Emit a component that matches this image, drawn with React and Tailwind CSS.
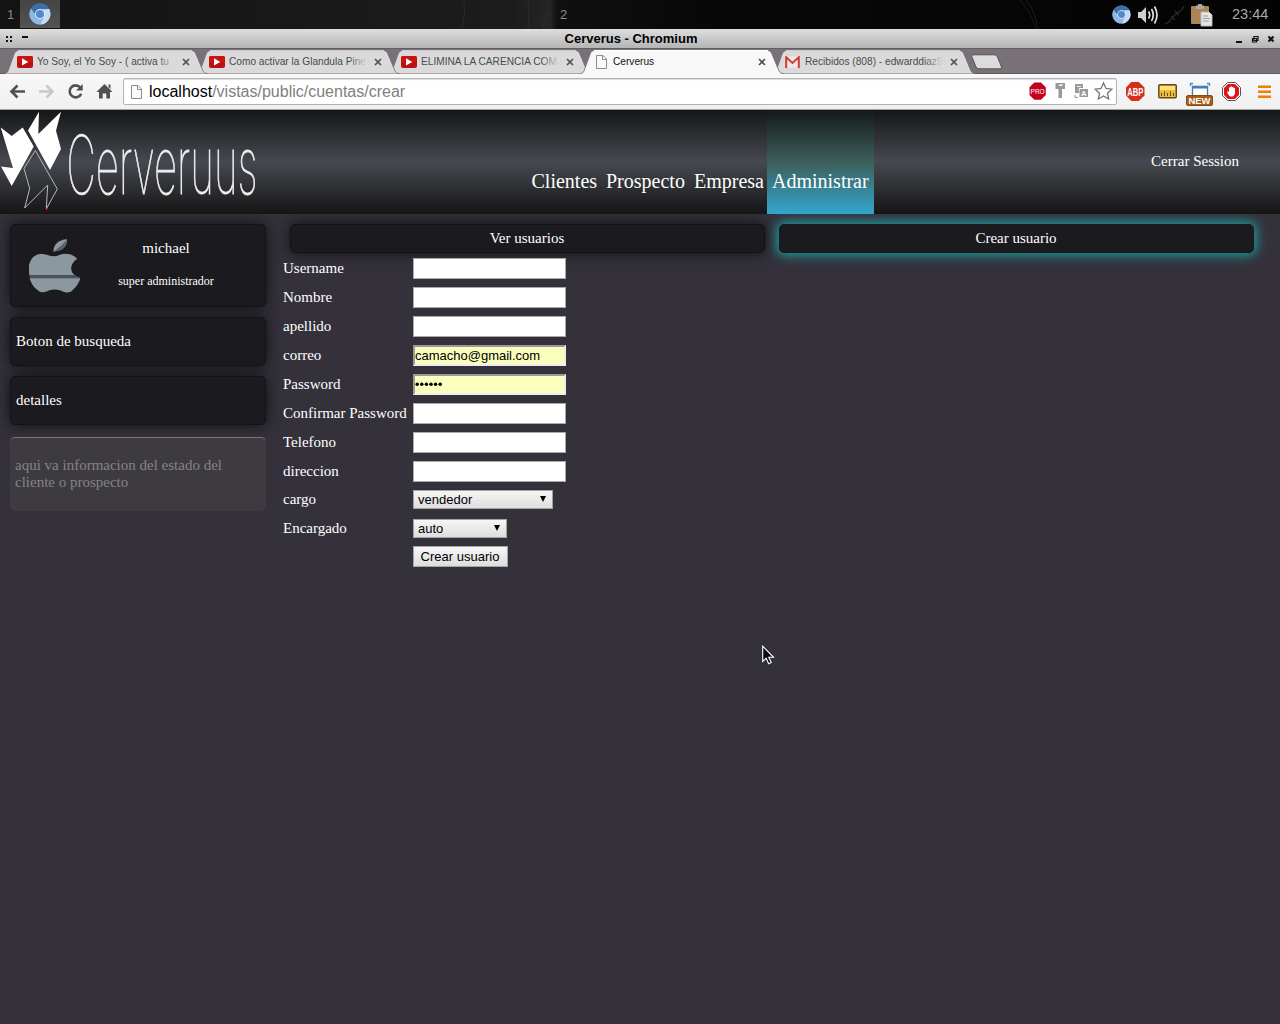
import React from "react";

function ChromiumIcon({ size, className = "" }) {
  return (
    <svg width={size} height={size} viewBox="0 0 24 24" className={className}>
      <circle cx="12" cy="12" r="11.5" fill="#76a3d6" />
      <path d="M2 6.3A11.5 11.5 0 0 1 22 6.5H12L7 12z" fill="#3f6fa6" />
      <path d="M22 6.5A11.5 11.5 0 0 1 12 23.5L17 13.5L15.5 7z" fill="#c6dcf2" />
      <path d="M2 6.3A11.5 11.5 0 0 0 12 23.5L15 17L7 13z" fill="#8db8e6" />
      <circle cx="12" cy="12" r="5.4" fill="#e3effa" />
      <circle cx="12" cy="12" r="4.4" fill="#5388c9" />
    </svg>
  );
}

function YoutubeIcon() {
  return (
    <svg width="16" height="12" viewBox="0 0 16 12">
      <rect width="16" height="12" rx="2" fill="#b9110f" />
      <rect width="16" height="6" rx="2" fill="#c91412" />
      <path d="M5 2.3L11.3 6L5 9.4z" fill="#fff" />
    </svg>
  );
}

function PageIcon({ className = "" }) {
  return (
    <svg width="13" height="16" viewBox="0 0 13 16" className={className}>
      <path d="M1.5 1.5H8L11.5 5V14.5H1.5z" fill="#fafafa" stroke="#8c8c8c" />
      <path d="M7.5 1.5V5.5H11.5" fill="none" stroke="#8c8c8c" />
    </svg>
  );
}

function GmailIcon() {
  return (
    <svg width="15" height="12" viewBox="0 0 15 12">
      <rect x="1" y="0.5" width="13" height="11" fill="#eee9e8" />
      <path d="M1.2 12V1.2L7.5 7L13.8 1.2V12" fill="none" stroke="#d23c33" strokeWidth="2" />
    </svg>
  );
}

function Tab({ title, icon, active, layer, fade }) {
  return (
    <div className={`relative flex h-6 w-[204px] shrink-0 items-center pl-[13px] ${layer}`}>
      <svg className="absolute left-0 top-0" width="204" height="24" viewBox="0 0 204 24">
        <path
          d="M0 24Q3 23.500 4 21L10.500 3Q11.500 .5 14 .5H188Q190.500 .5 191.500 3L199 21Q200 23.500 204 24z"
          fill={active ? "#f8f8f8" : "#dadada"}
        />
        {!active && <path d="M3 23.500H201" stroke="#a9a7a8" />}
        <path d="M14 .5H188" stroke={active ? "#ffffff" : "#cfccce"} />
        <path
          d="M0 24Q3 23.500 4 21L10.500 3Q11.500 .5 14 .5M188 .5Q190.500 .5 191.500 3L199 21Q200 23.500 204 24"
          fill="none"
          stroke="#6d676b"
          strokeOpacity="0.75"
        />
      </svg>
      <div className="relative flex w-5 shrink-0 items-center">{icon}</div>
      <div className="relative h-[18px] w-[138px]">
        <span
          className={`block w-fit origin-left scale-x-[0.922] whitespace-nowrap text-[11px] leading-[17px] ${active ? "text-[#111]" : "text-[#4a4a4a]"}`}
        >
          {title}
        </span>
        {fade && <span className="absolute right-0 top-0 h-[18px] w-[18px] bg-linear-to-r from-[#dadada]/0 to-[#dadada]" />}
      </div>
      <svg className="relative ml-[7px]" width="8" height="8" viewBox="0 0 8 8">
        <path d="M1 1L7 7M7 1L1 7" stroke="#4e4e4e" strokeWidth="1.6" />
      </svg>
    </div>
  );
}

function DesktopBar() {
  return (
    <div className="flex h-[29px] items-center bg-[linear-gradient(90deg,#131313,#181818_20%,#1c1c1c_40%,#252525_43%,#101010_43.500%,#080808_55%,#030303)] text-[#8b8b84]">
      <span className="w-5 pl-[7px] text-[13px]">1</span>
      <div className="flex h-[28px] w-10 items-center justify-center self-start bg-linear-to-b from-[#444] to-[#545454]">
        <ChromiumIcon size={22} />
      </div>
      <svg width="492" height="29" viewBox="0 0 492 29" className="shrink-0">
        <path d="M491 12Q485 14 483 29M468 0Q470 14 468 29M404 0Q406 14 402 29" stroke="#3b3b3b" fill="none" opacity="0.5" />
      </svg>
      <span className="w-[20px] pl-2 text-[13px]">2</span>
      <svg width="540" height="29" viewBox="0 0 540 29" className="shrink-0">
        <path d="M448 0Q459 12 464 29M454 0Q463 10 466 29" stroke="#1c1c1c" fill="none" />
      </svg>
      <ChromiumIcon size={19} />
      <svg width="22" height="20" viewBox="0 0 22 20" className="ml-[6px]">
        <path d="M1 7H4L9 2V18L4 13H1z" fill="#cfcfcf" />
        <path d="M11.500 6.500Q14 10 11.500 13.500M14.500 4Q18 10 14.500 16M17.500 1.500Q22.500 10 17.500 18.500" fill="none" stroke="#e2e2e2" strokeWidth="1.7" />
      </svg>
      <svg width="22" height="22" viewBox="0 0 22 22" className="ml-[5px]">
        <path d="M1 20Q6 18 8 14L13 9Q17 8 20 2M7 12L11 16M11 7L15 11" fill="none" stroke="#262626" strokeWidth="1.6" />
      </svg>
      <svg width="24" height="24" viewBox="0 0 24 24" className="ml-[4px]">
        <rect x="1" y="3" width="18" height="18" rx="1" fill="#a98456" />
        <path d="M6 2.500H8V1H12V2.500H14V6H6z" fill="#aaa9a5" />
        <path d="M11 9H19L22 12V23H11z" fill="#e6e6e6" stroke="#b7b7b7" />
        <path d="M13 13H18M13 15.500H20M13 18H19" stroke="#9b9b9b" />
      </svg>
      <span className="ml-[18px] text-[14.500px] text-[#aaa]">23:44</span>
    </div>
  );
}

function TitleBar() {
  return (
    <div className="flex h-5 items-center border-b border-[#625d60] bg-linear-to-b from-[#dedede] to-[#b5b5b5] text-black">
      <svg width="32" height="10" viewBox="0 0 32 10">
        <path d="M6 2h2v2h-2zM10 2h2v2h-2zM6 6h2v2h-2zM10 6h2v2h-2zM22 2h6v2h-6z" fill="#111" />
      </svg>
      <h1 className="flex-1 pr-1 text-center text-[13px] font-bold leading-[18px]">Cerverus - Chromium</h1>
      <svg width="46" height="10" viewBox="0 0 46 10">
        <path d="M2 7h6v2H2z" fill="#111" />
        <path d="M20 2.500h4v4h-4zM18.500 4.500h4v3.500h-4z" fill="#c8c8c8" stroke="#111" strokeWidth="1.2" />
        <path d="M34.500 2.500L39.500 7.500M39.500 2.500L34.500 7.500" stroke="#111" strokeWidth="2.200" />
      </svg>
    </div>
  );
}

function TabStrip() {
  return (
    <div className="flex h-[25px] items-end bg-[#787177] pl-1 shadow-[inset_0_-1px_0_#5f5a5e]">
      <Tab layer="z-30" icon={<YoutubeIcon />} title="Yo Soy, el Yo Soy - ( activa tu" fade />
      <div className="-ml-3"><Tab layer="z-20" icon={<YoutubeIcon />} title="Como activar la Glandula Pine" fade /></div>
      <div className="-ml-3"><Tab layer="z-10" icon={<YoutubeIcon />} title="ELIMINA LA CARENCIA COM" fade /></div>
      <div className="-ml-3"><Tab layer="z-40" icon={<PageIcon className="ml-[2px]" />} title="Cerverus" active /></div>
      <div className="-ml-3"><Tab layer="z-0" icon={<GmailIcon />} title="Recibidos (808) - edwarddiaz9" fade /></div>
      <svg width="34" height="17" viewBox="0 0 34 17" className="mb-[3px] -ml-[6px]">
        <path d="M3 .8H24.500Q26.500 .8 27.500 3L31.500 13Q32 14.800 30 14.800H9Q7 14.800 6 13L1.800 2.600Q1.300 .8 3 .8z" fill="#dcdcdc" stroke="#575257" />
      </svg>
    </div>
  );
}

function Toolbar() {
  return (
    <div className="flex h-9 items-center border-b border-[#a3a3a3] bg-linear-to-b from-[#f8f8f8] to-[#f0f0f0]">
      <svg width="123" height="35" viewBox="0 0 123 35" fill="none" className="shrink-0">
        <path d="M25 17.500H12M17.500 11.500L11.500 17.500L17.500 23.500" stroke="#505050" strokeWidth="2.600" />
        <path d="M39 17.500H52M46.500 11.500L52.500 17.500L46.500 23.500" stroke="#c9c9c9" strokeWidth="2.600" />
        <path d="M80.300 13.500A6 6 0 1 0 81.200 19.700" stroke="#505050" strokeWidth="2.600" />
        <path d="M82.700 10V16.500H76z" fill="#505050" />
        <path d="M104.500 10L112.500 18H110V24.500H106.300V19.500H102.700V24.500H99V18H96.500zM108.500 10.500H110.500V15L108.500 13z" fill="#505050" />
      </svg>
      <div className="flex h-[27px] w-[994px] shrink-0 items-center rounded-[2px] border border-[#b3b3b3] bg-white pl-[6px] shadow-[inset_0_1px_1px_#ddd]">
        <PageIcon />
        <p className="ml-[6px] w-[879px] shrink-0 whitespace-nowrap text-[16px] leading-6 text-[#808080]">
          <span className="text-black">localhost</span>/vistas/public/cuentas/crear
        </p>
        <svg width="86" height="25" viewBox="0 0 86 25" className="shrink-0">
          <path d="M6.300 3.500H13L17.800 8.200V16L13 20.800H6.300L1.500 16V8.200z" fill="#c4001d" />
          <text x="9.600" y="15.200" textAnchor="middle" fontSize="7.500" fill="#fff" fontFamily="Liberation Sans" textLength="14" lengthAdjust="spacingAndGlyphs">PRO</text>
          <path d="M27.500 4H37V10H34V19H30.500V10H27.500z" fill="#999" />
          <path d="M31 5.500H34.500V7H31z" fill="#fff" />
          <path d="M47 5H55V9H51V14H47z" fill="#999" />
          <path d="M49 7.500H53M50 11H51" stroke="#eee" />
          <rect x="51.500" y="10" width="8.500" height="8" fill="#999" />
          <text x="55.800" y="17" textAnchor="middle" fontSize="7.500" fontWeight="bold" fill="#fff" fontFamily="Liberation Sans">A</text>
          <path d="M47 16V18.500H50" stroke="#999" fill="none" />
          <path d="M75.500 4L78 9.500L83.800 10.200L79.500 14.200L80.700 20L75.500 17L70.300 20L71.500 14.200L67.200 10.200L73 9.500z" fill="#fff" stroke="#777" strokeWidth="1.300" />
        </svg>
      </div>
      <svg width="163" height="35" viewBox="0 0 163 35" className="shrink-0">
        <path d="M14.200 8H21.800L27.500 13.500V21.500L21.800 27H14.200L9 21.500V13.500z" fill="#d2311d" />
        <text x="18.200" y="21.500" textAnchor="middle" fontSize="10" fontWeight="bold" fill="#fff" fontFamily="Liberation Sans" textLength="16" lengthAdjust="spacingAndGlyphs">ABP</text>
        <rect x="41.800" y="10.700" width="17.500" height="13" rx="1" fill="#f0bd35" stroke="#5c4b20" strokeWidth="1.400" />
        <rect x="43" y="12" width="15" height="4" fill="#ffe07a" />
        <path d="M44.500 22V19M47.500 22V17.500M50.500 22V19M53.500 22V17.500M56.500 22V19" stroke="#5c4b20" />
        <path d="M73.500 12V9.500H76M90 9.500H92.500V12" fill="none" stroke="#4d87ba" strokeWidth="1.300" />
        <path d="M75.500 21V12.500H90.500V21" fill="#fff" stroke="#4380b4" strokeWidth="1.300" />
        <path d="M75 13.500H91" stroke="#4380b4" strokeWidth="2" />
        <rect x="69.500" y="21.500" width="26" height="10" rx="1.500" fill="#a85d18" stroke="#8c4a10" />
        <text x="82.500" y="30" textAnchor="middle" fontSize="9.500" fontWeight="bold" fill="#fff" fontFamily="Liberation Sans" textLength="22" lengthAdjust="spacingAndGlyphs">NEW</text>
        <path d="M110.500 8.500H118.500L123.500 13.500V21.500L118.500 26.500H110.500L105.500 21.500V13.500z" fill="#fff" stroke="#555" />
        <path d="M111 10H118L122 14V21L118 25H111L107 21V14z" fill="#dc1518" />
        <path d="M110.500 17L112 18V13.500H113.300V12.500H115V13H116.500V14H118V20L116 22.500H113L110.500 19.500z" fill="#fff" />
        <path d="M141 12.700H154M141 17.700H154M141 22.700H154" stroke="#e98207" strokeWidth="2.500" />
      </svg>
    </div>
  );
}

function Logo() {
  return (
    <svg width="280" height="104" viewBox="0 0 280 104" className="shrink-0">
      <g fill="#fff">
        <path d="M.7 17.500L11.700 26L22.700 17.500L33.700 36.500L11.700 76L1 56.500L13 58z" />
        <path d="M28 20.500L39 1.700L38.300 24L61 1.700L56 20.700L61 39L50 60z" />
      </g>
      <path d="M35.300 40.500L57.300 79L46.300 99L47.700 75L24.700 98L29.700 78.500L24 58.500z" fill="none" stroke="#b9b9bb" />
      <path d="M46 98.500h1.500v1.500h-1.500z" fill="#e00" />
      <text x="66.500" y="84" fontFamily="Inter" fontWeight="100" fontSize="81" fill="#f0f0f0" stroke="#f0f0f0" strokeWidth="0.900" textLength="191" lengthAdjust="spacingAndGlyphs">
        Cerveruus
      </text>
    </svg>
  );
}

function Header() {
  return (
    <header className="flex h-[104px] bg-[linear-gradient(#151617,#464950_50%,#151515)] text-white">
      <Logo />
      <nav className="ml-[247px] flex whitespace-nowrap text-[20px] leading-6">
        <a className="w-[74px] pl-[4.500px] pt-[59px]">Clientes</a>
        <a className="w-[88px] pl-[5px] pt-[59px]">Prospecto</a>
        <a className="w-[78px] pl-[5px] pt-[59px]">Empresa</a>
        <a className="w-[107px] bg-[linear-gradient(#151919,#3d5f5c_50%,#33a6cd)] pl-[5px] pt-[59px]">Administrar</a>
      </nav>
      <a className="ml-auto pr-[41px] pt-[42px] text-[15px] leading-[18px]">Cerrar Session</a>
    </header>
  );
}

function AppleIcon() {
  return (
    <svg width="52" height="54" viewBox="87 72 156 162" className="mt-3.5 ml-[18px] shrink-0">
      <path d="M91 188C84 170 84 150 93 135C105 113 130 115 145 121Q163 127 180 119C200 112 220 118 232 132C212 143 206 170 226 182L241 190H90z" fill="#8c989f" />
      <path d="M89 180H225L236 189H90z" fill="#4c5358" />
      <path d="M89 190H241C237 205 225 222 212 230C200 235 190 231 180 226Q163 221 148 226C140 230 130 235 120 230C105 222 94 208 89 190z" fill="#8c989f" />
      <path d="M160 110C160 90 175 74 201 73C203 90 185 110 160 110z" fill="#8c989f" />
      <path d="M162 109Q183 94 200 75Q202 108 162 109z" fill="#59636a" />
    </svg>
  );
}

const card = "rounded-[5px] border border-[#131216] bg-[#1b1a1e] shadow-[0_0_15px_rgba(0,0,0,0.7)]";

function Sidebar() {
  return (
    <aside className="flex w-64 shrink-0 flex-col gap-2.5 text-[15px] leading-[17px]">
      <section className={`flex h-[83px] ${card}`}>
        <AppleIcon />
        <div className="ml-[25px] w-[120px] pt-[15px] text-center">
          <p>michael</p>
          <p className="mt-4 text-[12px] leading-4">super administrador</p>
        </div>
      </section>
      <section className={`flex h-[49px] items-center pl-[5px] ${card}`}>Boton de busqueda</section>
      <section className={`flex h-[49px] items-center pl-[5px] ${card}`}>detalles</section>
      <p className="relative mt-0.5 h-[74px] rounded-[5px] border-t border-[#77757a] bg-[#3d3b40] pl-[5px] pr-8 pt-[19px] text-[#858388]">
        aqui va informacion del estado del cliente o prospecto
      </p>
    </aside>
  );
}

const fields = [
  ["Username", ""],
  ["Nombre", ""],
  ["apellido", ""],
  ["correo", "camacho@gmail.com"],
  ["Password", "••••••"],
  ["Confirmar Password", ""],
  ["Telefono", ""],
  ["direccion", ""],
];

function Select({ value, width }) {
  return (
    <div className={`flex h-[19px] items-center justify-between border border-[#a3a3a3] bg-linear-to-b from-[#f6f6f6] to-[#dedede] pl-1 pr-[5px] font-[Liberation_Sans] text-[13px] leading-4 text-black ${width}`}>
      {value}
      <svg width="8" height="8" viewBox="0 0 8 8" className="mb-px"><path d="M1 1H7L4 7z" fill="#000" /></svg>
    </div>
  );
}

function UserForm() {
  return (
    <form className="relative mt-[5px] text-[15px] leading-[21px]">
      {fields.map(([label, value]) => (
        <div key={label} className="mb-2 flex h-[21px]">
          <label className="w-[130px] whitespace-nowrap">{label}</label>
          <div
            className={
              value
                ? "h-[21px] w-[153px] border-2 border-[#eee] border-l-[#9a9a9a] border-t-[#9a9a9a] bg-[#faffbd] font-[Liberation_Sans] text-[13px] leading-[17px] text-black"
                : "h-[21px] w-[153px] border border-[#a9a9a9] bg-white"
            }
          >
            {label === "Password" ? (
              <svg width="30" height="16" viewBox="0 0 30 16" className="block">
                {[0, 1, 2, 3, 4, 5].map((n) => (
                  <circle key={n} cx={2.2 + n * 4.6} cy="8.300" r="1.750" />
                ))}
              </svg>
            ) : (
              value
            )}
          </div>
        </div>
      ))}
      <div className="mb-2.5 flex h-[19px] leading-[19px]">
        <label className="w-[130px]">cargo</label>
        <Select value="vendedor" width="w-[140px]" />
      </div>
      <div className="mb-2 flex h-[19px] leading-[19px]">
        <label className="w-[130px]">Encargado</label>
        <Select value="auto" width="w-[94px]" />
      </div>
      <button type="button" className="ml-[130px] block h-[21px] w-[95px] whitespace-nowrap border border-[#a3a3a3] bg-linear-to-b from-[#f6f6f6] to-[#dedede] pr-px font-[Liberation_Sans] text-[13px] leading-[19px] text-black">
        Crear usuario
      </button>
    </form>
  );
}

export default function App() {
  return (
    <div className="relative flex h-[1024px] w-[1280px] flex-col overflow-hidden bg-[#34313b] font-['Liberation_Sans',sans-serif]">
      <DesktopBar />
      <TitleBar />
      <TabStrip />
      <Toolbar />
      <div className="flex-1 font-['Liberation_Serif',serif] text-white">
        <div className="relative z-10">
          <Header />
        </div>
        <main className="flex gap-[17px] pl-2.5 pt-2.5">
          <Sidebar />
          <div className="flex-1">
            <div className="ml-[7px] flex gap-3.5 text-center text-[15px] leading-[27px]">
              <a className={`h-[29px] w-[475px] pr-px ${card}`}>Ver usuarios</a>
              <a className="h-[29px] w-[475px] rounded-[5px] border border-[#14191b] bg-[#1b1a1e] pr-px shadow-[0_0_12px_2px_#1fa3a3]">Crear usuario</a>
            </div>
            <UserForm />
          </div>
        </main>
      </div>
      <svg className="absolute left-[762px] top-[645px]" width="13" height="20" viewBox="0 0 13 20">
        <path d="M.7 1.200V16.500L4.200 13.200L6.700 18.700L9.200 17.500L6.800 12.300H11.500z" fill="#0b0b0b" stroke="#fff" strokeWidth="1.100" />
      </svg>
    </div>
  );
}
